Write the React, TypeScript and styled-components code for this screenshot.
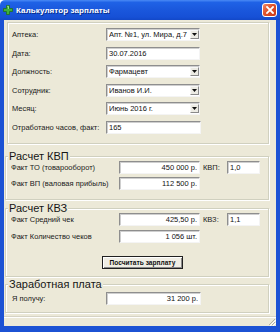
import React from "react";
import styled, { createGlobalStyle } from "styled-components";

const Global = createGlobalStyle`
  html, body { margin: 0; padding: 0; background: #ffffff; }
  body { font-family: "Liberation Sans", Arial, sans-serif; }
  #root { width: 280px; height: 332px; }
`;

const BLUE = "#1c52d4";
const BEIGE = "#ECE9D8";

const Window = styled.div`
  width: 280px;
  height: 332px;
  display: flex;
  flex-direction: column;
  overflow: hidden;
`;

const TitleBar = styled.div`
  height: 20px;
  flex: none;
  display: flex;
  align-items: center;
  padding: 0 3px 0 3px;
  box-sizing: border-box;
  border-radius: 5px 5px 0 0;
  background: linear-gradient(
    to bottom,
    #4a8af5 0%,
    #1f62e6 12%,
    #1a57dc 50%,
    #1650d6 85%,
    #1248c8 100%
  );
`;

const TitleText = styled.span`
  margin-left: 3px;
  color: #ffffff;
  font-weight: bold;
  font-size: 8px;
  letter-spacing: 0.1px;
  text-shadow: 1px 1px 0 #0b2f8c;
  white-space: nowrap;
  flex: 1;
`;

const CloseButton = styled.div`
  width: 15px;
  height: 14px;
  box-sizing: border-box;
  border: 1px solid #ffffff;
  border-radius: 3px;
  background: linear-gradient(135deg, #f08a6a 0%, #e0512a 45%, #c8391a 100%);
  display: flex;
  align-items: center;
  justify-content: center;
`;

const Frame = styled.div`
  flex: 1;
  display: flex;
  flex-direction: column;
  background: ${BEIGE};
  border-style: solid;
  border-color: ${BLUE};
  border-width: 0 4px 6px 4px;
  min-height: 0;
`;

const etched = `
  border: 1px solid #d0d0bf;
  box-shadow: inset 1px 1px 0 #ffffff, 1px 1px 0 #ffffff;
`;

const TopPanel = styled.div`
  margin: 2px 7px 0 3px;
  height: 122px;
  box-sizing: border-box;
  ${etched}
  padding: 5px 0 0 4px;
  display: grid;
  grid-template-columns: 94px 94px;
  grid-auto-rows: 13px;
  row-gap: 5.6px;
`;

const Group = styled.fieldset<{ $mt: number; $pt?: number; $pb: number }>`
  margin: ${(p) => p.$mt}px 7px 0 1px;
  padding: ${(p) => p.$pt ?? 0}px 0 ${(p) => p.$pb}px 0;
  min-width: 0;
  ${etched}
`;

const Legend = styled.legend`
  font-size: 11px;
  line-height: 10px;
  padding: 0 1px;
  margin-left: 2px;
  color: #151515;
  background: ${BEIGE};
  white-space: nowrap;
`;

const GroupGrid = styled.div<{ $cols: string; $gap: number; $pl: number }>`
  display: grid;
  grid-template-columns: ${(p) => p.$cols};
  grid-auto-rows: 13px;
  row-gap: ${(p) => p.$gap}px;
  padding-left: ${(p) => p.$pl}px;
`;

const Label = styled.span<{ $ml?: number }>`
  font-size: 7.5px;
  line-height: 13px;
  color: #1a1a1a;
  white-space: nowrap;
  margin-left: ${(p) => p.$ml ?? 0}px;
`;

const Field = styled.div<{ $w: number; $right?: boolean }>`
  box-sizing: border-box;
  width: ${(p) => p.$w}px;
  height: 13px;
  background: #ffffff;
  border: 1px solid;
  border-color: #8e8e8e #f4f4f4 #f4f4f4 #8e8e8e;
  box-shadow: inset 1px 1px 0 #cfcfcf;
  font-size: 7.5px;
  color: #111111;
  padding: 0 2px 0 2px;
  display: flex;
  align-items: center;
  justify-content: ${(p) => (p.$right ? "flex-end" : "flex-start")};
  white-space: nowrap;
  overflow: hidden;
`;

const SelectText = styled.span`
  flex: 1;
  overflow: hidden;
`;

const ArrowBox = styled.span`
  flex: none;
  width: 9px;
  height: 9px;
  box-sizing: border-box;
  margin-right: -1px;
  border: 1px solid;
  border-color: #f7f7f7 #8a8a8a #8a8a8a #f7f7f7;
  background: #ecebe4;
  display: flex;
  align-items: center;
  justify-content: center;
`;

const ButtonRow = styled.div`
  padding-left: 96px;
  margin-top: 13px;
`;

const PushButton = styled.div`
  width: 81px;
  height: 13px;
  box-sizing: border-box;
  border: 1px solid #202020;
  box-shadow: inset 1px 1px 0 #ffffff, inset -1px -1px 0 #8a8a8a;
  background: #efede4;
  font-size: 6.6px;
  font-weight: bold;
  color: #111111;
  display: flex;
  align-items: center;
  justify-content: center;
  white-space: nowrap;
`;

const StatusBar = styled.div`
  margin-top: auto;
  height: 9px;
  flex: none;
  border-top: 1px solid #d6d3c4;
  box-shadow: inset 0 1px 0 #ffffff;
  display: flex;
  justify-content: flex-end;
  align-items: flex-end;
`;

const Arrow = () => (
  <svg width="5" height="3" viewBox="0 0 5 3">
    <path d="M0 0h5L2.5 3z" fill="#111" />
  </svg>
);

const Select = ({ w, children }: { w: number; children: React.ReactNode }) => (
  <Field $w={w} style={{ paddingRight: 1 }}>
    <SelectText>{children}</SelectText>
    <ArrowBox>
      <Arrow />
    </ArrowBox>
  </Field>
);

const PharmacyIcon = () => (
  <svg width="10" height="10" viewBox="0 0 10 10">
    <path
      d="M3.5 0.5h3v3h3v3h-3v3h-3v-3h-3v-3h3z"
      fill="#3fb23a"
      stroke="#1f6f1d"
      strokeWidth="0.8"
    />
    <path d="M4.2 1.3h1.2v2.6" stroke="#b8f0a8" strokeWidth="0.8" fill="none" />
  </svg>
);

const CloseIcon = () => (
  <svg width="8" height="8" viewBox="0 0 8 8">
    <path d="M1 1L7 7M7 1L1 7" stroke="#fff" strokeWidth="1.8" strokeLinecap="square" />
  </svg>
);

const Grip = () => (
  <svg width="9" height="9" viewBox="0 0 9 9">
    <path d="M8 2L2 8M8 5L5 8" stroke="#b5b2a2" strokeWidth="1" />
    <path d="M9 3L3 9M9 6L6 9" stroke="#ffffff" strokeWidth="1" />
  </svg>
);

const calcCols = "108px 81px 27px 33px";

export default function App() {
  return (
    <>
      <Global />
      <Window>
        <TitleBar>
          <PharmacyIcon />
          <TitleText>Калькулятор зарплаты</TitleText>
          <CloseButton>
            <CloseIcon />
          </CloseButton>
        </TitleBar>
        <Frame>
          <TopPanel>
            <Label>Аптека:</Label>
            <Select w={94}>Апт. №1, ул. Мира, д.7</Select>
            <Label>Дата:</Label>
            <Field $w={94}>30.07.2016</Field>
            <Label>Должность:</Label>
            <Select w={94}>Фармацевт</Select>
            <Label>Сотрудник:</Label>
            <Select w={94}>Иванов И.И.</Select>
            <Label>Месяц:</Label>
            <Select w={94}>Июнь 2016 г.</Select>
            <Label>Отработано часов, факт:</Label>
            <Field $w={95}>165</Field>
          </TopPanel>

          <Group $mt={7} $pb={9}>
            <Legend>Расчет КВП</Legend>
            <GroupGrid $cols={calcCols} $gap={3} $pl={5}>
              <Label>Факт ТО (товарооборот)</Label>
              <Field $w={81} $right>
                450 000 р.
              </Field>
              <Label $ml={3}>КВП:</Label>
              <Field $w={33}>1,0</Field>
              <Label>Факт ВП (валовая прибыль)</Label>
              <Field $w={81} $right>
                112 500 р.
              </Field>
            </GroupGrid>
          </Group>

          <Group $mt={3} $pb={7}>
            <Legend>Расчет КВЗ</Legend>
            <GroupGrid $cols={calcCols} $gap={4} $pl={5}>
              <Label>Факт Средний чек</Label>
              <Field $w={81} $right>
                425,50 р.
              </Field>
              <Label $ml={3}>КВЗ:</Label>
              <Field $w={33}>1,1</Field>
              <Label>Факт Количество чеков</Label>
              <Field $w={81} $right>
                1 056 шт.
              </Field>
            </GroupGrid>
            <ButtonRow>
              <PushButton>Посчитать зарплату</PushButton>
            </ButtonRow>
          </Group>

          <Group $mt={2} $pt={3} $pb={7}>
            <Legend>Заработная плата</Legend>
            <GroupGrid $cols="94px 95px" $gap={0} $pl={6}>
              <Label>Я получу:</Label>
              <Field $w={95} $right>
                31 200 р.
              </Field>
            </GroupGrid>
          </Group>

          <StatusBar>
            <Grip />
          </StatusBar>
        </Frame>
      </Window>
    </>
  );
}
